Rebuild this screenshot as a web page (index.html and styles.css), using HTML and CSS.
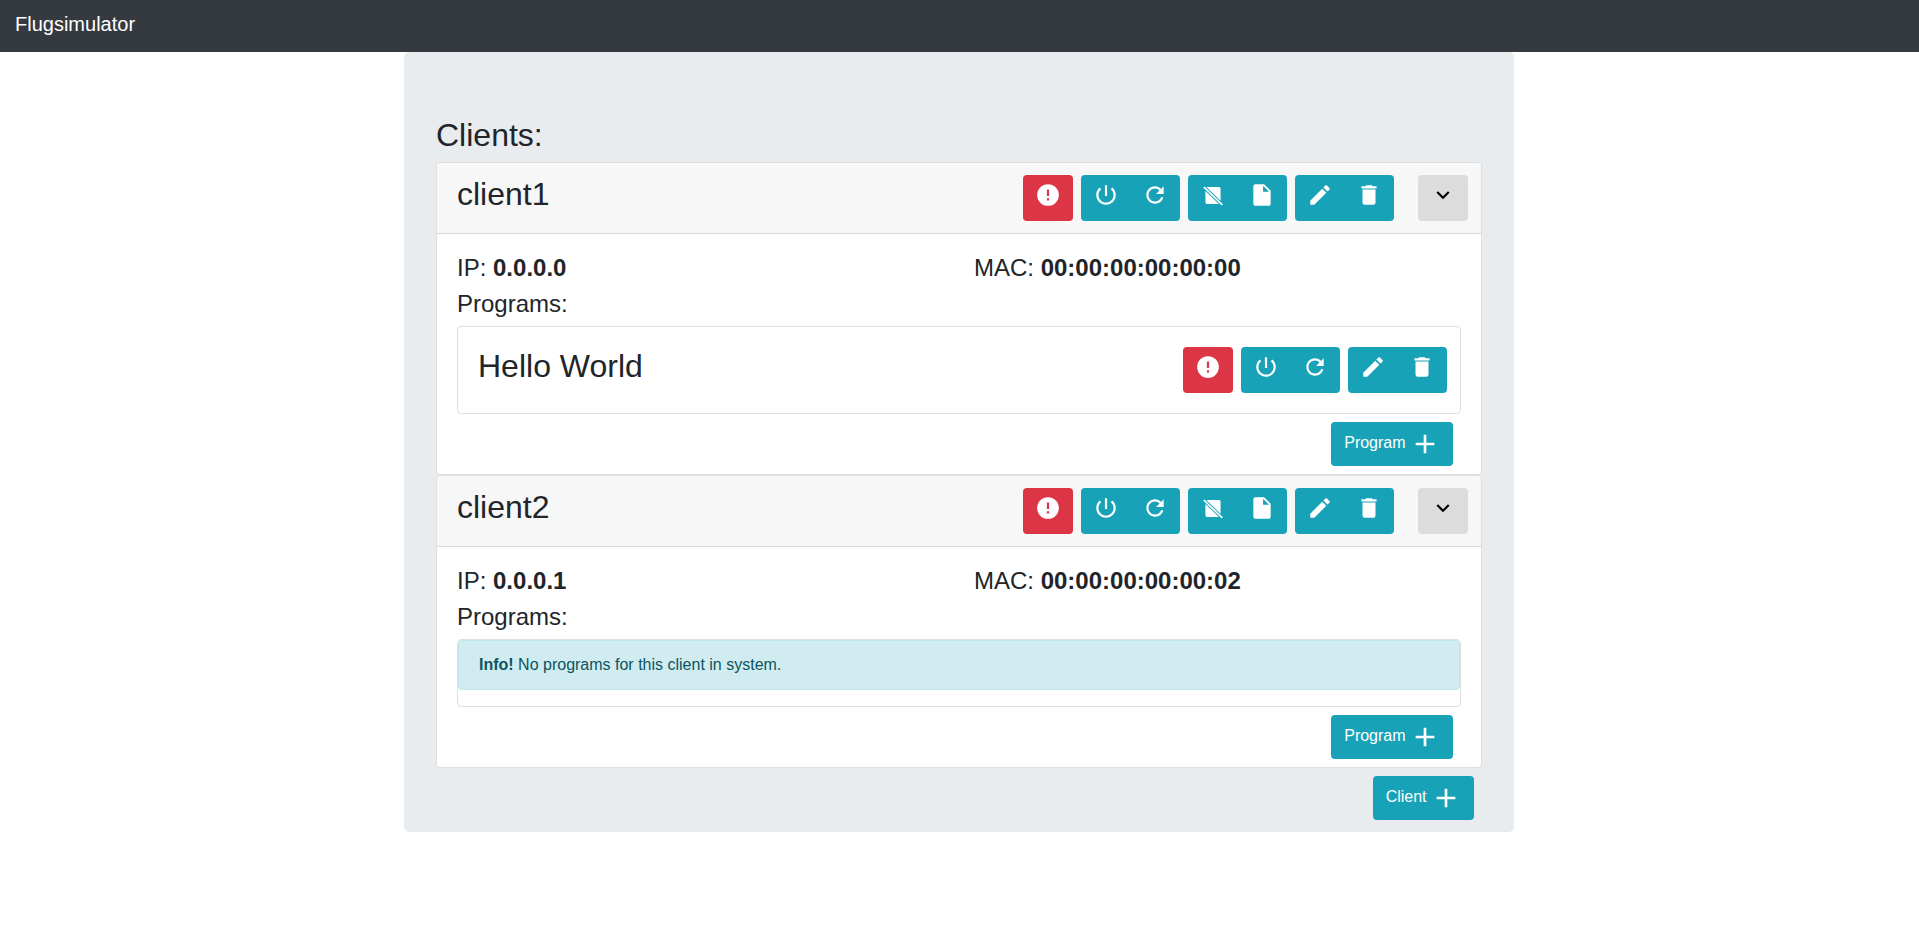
FILE: index.html
```html
<!DOCTYPE html>
<html lang="en">
<head>
    <meta charset="UTF-8">
    <title>Flugsimulator</title>
    <link rel="stylesheet" href="styles.css">
</head>
<body>
    <svg class="sprites" width="0" height="0">
        <symbol id="i-alert" viewBox="0 0 24 24"><path d="M13,13H11V7H13M13,17H11V15H13M12,2A10,10 0 0,0 2,12A10,10 0 0,0 12,22A10,10 0 0,0 22,12A10,10 0 0,0 12,2Z"/></symbol>
        <symbol id="i-power" viewBox="0 0 24 24"><path d="M13 3h-2v10h2V3zm4.83 2.17l-1.42 1.42C17.99 7.86 19 9.81 19 12c0 3.87-3.13 7-7 7s-7-3.13-7-7c0-2.19 1.01-4.14 2.58-5.42L6.17 5.17C4.23 6.82 3 9.26 3 12c0 4.97 4.03 9 9 9s9-4.03 9-9c0-2.74-1.23-5.18-3.17-6.83z"/></symbol>
        <symbol id="i-refresh" viewBox="0 0 24 24"><path d="M17.65 6.35C16.2 4.9 14.21 4 12 4c-4.42 0-7.99 3.58-7.99 8s3.57 8 7.99 8c3.73 0 6.84-2.55 7.73-6h-2.08c-.82 2.33-3.04 4-5.65 4-3.31 0-6-2.69-6-6s2.69-6 6-6c1.66 0 3.14.69 4.22 1.78L13 11h7V4l-2.35 2.35z"/></symbol>
        <symbol id="i-file-off" viewBox="0 0 24 24"><path d="M5.8 4.6H17.5a1.5 1.5 0 0 1 1.5 1.5V17.4zM5 8.25V18.8a1.5 1.5 0 0 0 1.5 1.5H17.4zM4.06 4.04L21.16 20.64L20.04 21.76L2.94 5.16z"/></symbol>
        <symbol id="i-file" viewBox="0 0 24 24"><path d="M14,2H6A2,2 0 0,0 4,4V20A2,2 0 0,0 6,22H18A2,2 0 0,0 20,20V8L14,2M13,9V3.5L18.5,9H13Z"/></symbol>
        <symbol id="i-pencil" viewBox="0 0 24 24"><path d="M20.71,7.04C21.1,6.65 21.1,6 20.71,5.63L18.37,3.29C18,2.9 17.35,2.9 16.96,3.29L15.12,5.12L18.87,8.87M3,17.25V21H6.75L17.81,9.93L14.06,6.18L3,17.25Z"/></symbol>
        <symbol id="i-trash" viewBox="0 0 24 24"><path d="M19,4H15.5L14.5,3H9.5L8.5,4H5V6H19M6,19A2,2 0 0,0 8,21H16A2,2 0 0,0 18,19V7H6V19Z"/></symbol>
        <symbol id="i-chevron" viewBox="0 0 24 24"><path d="M7.41,8.58L12,13.17L16.59,8.58L18,10L12,16L6,10L7.41,8.58Z"/></symbol>
        <symbol id="i-plus" viewBox="0 0 24 24"><path d="M19 13h-6v6h-2v-6H5v-2h6V5h2v6h6v2z"/></symbol>
    </svg>

    <nav class="navbar"><a class="brand">Flugsimulator</a></nav>

    <div class="container">
        <div class="jumbotron">
            <h2 class="clients-title">Clients:</h2>

            <div class="card">
                <div class="card-header">
                    <h3 class="title">client1</h3>
                    <div class="actions">
                        <button class="btn danger"><svg class="icon"><use href="#i-alert"/></svg></button>
                        <div class="btn-group">
                            <button class="btn info"><svg class="icon"><use href="#i-power"/></svg></button>
                            <button class="btn info"><svg class="icon"><use href="#i-refresh"/></svg></button>
                        </div>
                        <div class="btn-group">
                            <button class="btn info"><svg class="icon"><use href="#i-file-off"/></svg></button>
                            <button class="btn info"><svg class="icon"><use href="#i-file"/></svg></button>
                        </div>
                        <div class="btn-group">
                            <button class="btn info"><svg class="icon"><use href="#i-pencil"/></svg></button>
                            <button class="btn info"><svg class="icon"><use href="#i-trash"/></svg></button>
                        </div>
                        <button class="btn toggle"><svg class="icon"><use href="#i-chevron"/></svg></button>
                    </div>
                </div>
                <div class="card-body">
                    <div class="row">
                        <div>IP: <b>0.0.0.0</b></div>
                        <div>MAC: <b>00:00:00:00:00:00</b></div>
                    </div>
                    <div class="programs-label">Programs:</div>
                    <div class="programs">
                        <div class="program">
                            <h3 class="title">Hello World</h3>
                            <div class="actions">
                                <button class="btn danger"><svg class="icon"><use href="#i-alert"/></svg></button>
                                <div class="btn-group">
                                    <button class="btn info"><svg class="icon"><use href="#i-power"/></svg></button>
                                    <button class="btn info"><svg class="icon"><use href="#i-refresh"/></svg></button>
                                </div>
                                <div class="btn-group">
                                    <button class="btn info"><svg class="icon"><use href="#i-pencil"/></svg></button>
                                    <button class="btn info"><svg class="icon"><use href="#i-trash"/></svg></button>
                                </div>
                            </div>
                        </div>
                    </div>
                    <div class="add-row">
                        <button class="btn info add"><span>Program</span><svg class="plus"><use href="#i-plus"/></svg></button>
                    </div>
                </div>
            </div>

            <div class="card">
                <div class="card-header">
                    <h3 class="title">client2</h3>
                    <div class="actions">
                        <button class="btn danger"><svg class="icon"><use href="#i-alert"/></svg></button>
                        <div class="btn-group">
                            <button class="btn info"><svg class="icon"><use href="#i-power"/></svg></button>
                            <button class="btn info"><svg class="icon"><use href="#i-refresh"/></svg></button>
                        </div>
                        <div class="btn-group">
                            <button class="btn info"><svg class="icon"><use href="#i-file-off"/></svg></button>
                            <button class="btn info"><svg class="icon"><use href="#i-file"/></svg></button>
                        </div>
                        <div class="btn-group">
                            <button class="btn info"><svg class="icon"><use href="#i-pencil"/></svg></button>
                            <button class="btn info"><svg class="icon"><use href="#i-trash"/></svg></button>
                        </div>
                        <button class="btn toggle"><svg class="icon"><use href="#i-chevron"/></svg></button>
                    </div>
                </div>
                <div class="card-body">
                    <div class="row">
                        <div>IP: <b>0.0.0.1</b></div>
                        <div>MAC: <b>00:00:00:00:00:02</b></div>
                    </div>
                    <div class="programs-label">Programs:</div>
                    <div class="programs">
                        <div class="alert"><b>Info!</b> No programs for this client in system.</div>
                    </div>
                    <div class="add-row">
                        <button class="btn info add"><span>Program</span><svg class="plus"><use href="#i-plus"/></svg></button>
                    </div>
                </div>
            </div>

            <div class="add-row">
                <button class="btn info add"><span>Client</span><svg class="plus"><use href="#i-plus"/></svg></button>
            </div>
        </div>
    </div>
</body>
</html>
```

FILE: styles.css
```css
/* General Reset */
* {
    margin: 0;
    padding: 0;
    box-sizing: border-box;
}

body {
    font-family: "Liberation Sans", Arial, sans-serif;
    font-size: 16px;
    line-height: 1.5;
    color: #212529;
    background-color: #fff;
}

.sprites {
    display: block;
    height: 0;
}

.navbar {
    height: 52px;
    padding: 0 15px;
    display: flex;
    align-items: center;
    background-color: #343a40;
}

.brand {
    font-size: 20px;
    color: #fff;
    margin-top: -5px;
}

.container {
    width: 1110px;
    margin-left: 404px;
}

.jumbotron {
    padding: 64px 32px 12px;
    background-color: #e9ecef;
    border-radius: 5px;
}

.clients-title {
    font-size: 32px;
    font-weight: 400;
    line-height: 38px;
    margin-bottom: 8px;
}

.card {
    background-color: #fff;
    border: 1px solid rgba(0, 0, 0, 0.125);
    border-radius: 4px;
}

.card-header {
    display: flex;
    justify-content: space-between;
    align-items: flex-start;
    padding: 12px 13px 12px 20px;
    background-color: #f7f7f7;
    border-bottom: 1px solid rgba(0, 0, 0, 0.125);
    border-radius: 3px 3px 0 0;
}

.title {
    font-size: 32px;
    font-weight: 400;
    line-height: 1.2;
}

.actions {
    display: flex;
    gap: 8px;
}

.actions .toggle {
    margin-left: 16px;
}

.btn {
    display: block;
    border: 1px solid transparent;
    border-radius: 4px;
    font-family: inherit;
    font-size: 16px;
    line-height: 1.5;
    color: #fff;
    cursor: pointer;
}

.btn .icon {
    display: block;
    width: 26px;
    height: 26px;
    margin: -1px;
    fill: currentColor;
}

.actions .btn {
    width: 50px;
    height: 46px;
    padding: 7px 12px 13px;
}

.danger {
    background-color: #dc3545;
}

.info {
    background-color: #17a2b8;
}

.toggle {
    background-color: #dcdcdc;
    color: #000;
}

.btn-group {
    display: flex;
}

.btn-group .btn + .btn {
    margin-left: -1px;
    border-radius: 0 4px 4px 0;
}

.btn-group .btn:first-child {
    border-radius: 4px 0 0 4px;
}

.card-body {
    padding: 16px 20px 8px;
}

.row {
    display: grid;
    grid-template-columns: 517px 1fr;
    margin-right: -15px;
    font-size: 24px;
}

.programs-label {
    font-size: 24px;
    margin-bottom: 4px;
}

.programs {
    border: 1px solid rgba(0, 0, 0, 0.125);
    border-radius: 4px;
}

.program {
    display: flex;
    justify-content: space-between;
    align-items: flex-start;
    padding: 20px 13px 20px 20px;
}

.alert {
    height: 50px;
    margin-bottom: 16px;
    padding: 12px 20px;
    color: #0c5460;
    background-color: #d1ecf1;
    border: 1px solid #bee5eb;
    border-radius: 4px;
}

.add-row {
    display: flex;
    justify-content: flex-end;
    margin-top: 8px;
    padding-right: 8px;
}

.add {
    display: flex;
    align-items: center;
    gap: 4.45px;
    height: 44px;
    padding: 6px 12px;
}

.add span {
    margin-bottom: 3px;
}

.plus {
    display: block;
    width: 32px;
    height: 32px;
    margin: -1px;
    fill: currentColor;
}
```
